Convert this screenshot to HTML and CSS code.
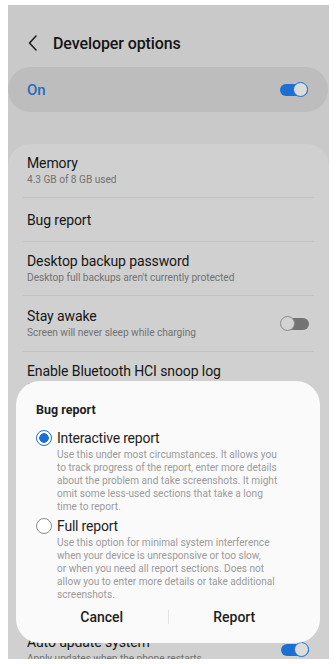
FILE: index.html
```html
<!DOCTYPE html>
<html lang="en">
<head>
    <meta charset="UTF-8">
    <meta name="viewport" content="width=device-width, initial-scale=1.0">
    <title>Developer options</title>
    <link rel="stylesheet" href="styles.css">
</head>
<body>
    <div class="screen">
        <div class="header">
            <svg class="back" width="10" height="16" viewBox="0 0 10 16">
                <polyline points="8,1 1.5,8 8,15" fill="none" stroke="#1a1a1a" stroke-width="1.5" stroke-linecap="round" stroke-linejoin="round"/>
            </svg>
            <h1>Developer options</h1>
        </div>

        <div class="master-switch">
            <span class="on-label">On</span>
            <span class="toggle on"></span>
        </div>

        <div class="settings-card">
            <div class="item">
                <div class="item-title">Memory</div>
                <div class="item-sub">4.3 GB of 8 GB used</div>
            </div>
            <div class="divider"></div>
            <div class="item single">
                <div class="item-title">Bug report</div>
            </div>
            <div class="divider"></div>
            <div class="item">
                <div class="item-title">Desktop backup password</div>
                <div class="item-sub">Desktop full backups aren't currently protected</div>
            </div>
            <div class="divider"></div>
            <div class="item with-toggle">
                <div>
                    <div class="item-title">Stay awake</div>
                    <div class="item-sub">Screen will never sleep while charging</div>
                </div>
                <span class="toggle"></span>
            </div>
            <div class="divider"></div>
            <div class="item">
                <div class="item-title">Enable Bluetooth HCI snoop log</div>
                <div class="item-sub">Capture all Bluetooth HCI packets in a file</div>
            </div>
            <div class="divider"></div>
            <div class="item">
                <div class="item-title">OEM unlocking</div>
                <div class="item-sub">Allow the bootloader to be unlocked</div>
            </div>
            <div class="divider"></div>
            <div class="item">
                <div class="item-title">Running services</div>
                <div class="item-sub">View and control currently running services</div>
            </div>
            <div class="divider"></div>
            <div class="item">
                <div class="item-title">Picture color mode</div>
                <div class="item-sub">Use sRGB</div>
            </div>
            <div class="divider"></div>
            <div class="item">
                <div class="item-title">WebView implementation</div>
                <div class="item-sub">Android System WebView</div>
            </div>
            <div class="divider"></div>
            <div class="item with-toggle">
                <div>
                    <div class="item-title">Auto update system</div>
                    <div class="item-sub">Apply updates when the phone restarts</div>
                </div>
                <span class="toggle on"></span>
            </div>
        </div>

        <div class="dialog">
            <div class="dialog-title">Bug report</div>

            <div class="option">
                <div class="option-row">
                    <span class="radio checked"></span>
                    <span class="option-label">Interactive report</span>
                </div>
                <p class="option-desc">Use this under most circumstances. It allows you<br>to track progress of the report, enter more details<br>about the problem and take screenshots. It might<br>omit some less-used sections that take a long<br>time to report.</p>
            </div>

            <div class="option second">
                <div class="option-row">
                    <span class="radio"></span>
                    <span class="option-label">Full report</span>
                </div>
                <p class="option-desc">Use this option for minimal system interference<br>when your device is unresponsive or too slow,<br>or when you need all report sections. Does not<br>allow you to enter more details or take additional<br>screenshots.</p>
            </div>

            <div class="dialog-buttons">
                <button class="dialog-btn">Cancel</button>
                <span class="btn-sep"></span>
                <button class="dialog-btn">Report</button>
            </div>
        </div>
    </div>
</body>
</html>
```

FILE: styles.css
```css
body {
    margin: 0;
    background: #ffffff;
    font-family: Roboto, "Noto Sans", sans-serif;
}
.screen {
    position: relative;
    width: 321px;
    height: 654px;
    margin: 5px 0 0 8px;
    background-color: #c9c9c9;
    overflow: hidden;
}
.header {
    display: flex;
    align-items: center;
    height: 48px;
    margin-top: 14px;
    padding-left: 20px;
}
.back {
    margin-right: 15px;
}
h1 {
    margin: 0;
    font-size: 16px;
    font-weight: 500;
    color: #141414;
    letter-spacing: -0.1px;
}
.master-switch {
    display: flex;
    align-items: center;
    justify-content: space-between;
    height: 45px;
    margin-right: 1px;
    padding: 0 20px 0 19px;
    border-radius: 23px;
    background-color: #bdbdbd;
}
.on-label {
    font-size: 15px;
    font-weight: 500;
    color: #2a6cbd;
}
.toggle {
    position: relative;
    display: inline-block;
    width: 29px;
    height: 16px;
    flex-shrink: 0;
}
.toggle::before {
    content: "";
    position: absolute;
    left: 1px;
    right: 0;
    top: 2px;
    height: 12px;
    border-radius: 6px;
    background-color: #737373;
}
.toggle::after {
    content: "";
    position: absolute;
    left: 0;
    top: 0;
    width: 13px;
    height: 13px;
    border-radius: 50%;
    border: 1.5px solid #8a8a8a;
    background-color: #d2d2d2;
}
.toggle.on::before {
    background-color: #1c6fd3;
}
.toggle.on::after {
    left: auto;
    right: 0;
    border-color: #1c6fd3;
    background-color: #dcdcdc;
}
.settings-card {
    margin-top: 32px;
    border-radius: 22px 22px 0 0;
    background-color: #d0d0d0;
}
.item {
    padding: 10px 20px 10px 19px;
}
.item.single {
    padding: 12.5px 20px 12.5px 19px;
}
.item.with-toggle {
    display: flex;
    align-items: center;
    justify-content: space-between;
    padding-top: 11px;
    padding-bottom: 11px;
}
.item-title {
    font-size: 14px;
    line-height: 18px;
    color: #161616;
    letter-spacing: -0.1px;
}
.item-sub {
    font-size: 10.2px;
    line-height: 15px;
    color: #727272;
    letter-spacing: -0.05px;
}
.divider {
    height: 1px;
    margin: 0 15px;
    background-color: #c2c2c2;
}
.dialog {
    position: absolute;
    left: 8px;
    top: 376px;
    width: 264px;
    padding: 20px 20px 16px;
    border-radius: 24px;
    background-color: #fafafa;
}
.dialog-title {
    font-size: 12.5px;
    font-weight: 700;
    line-height: 17px;
    color: #1e1e1e;
}
.option {
    margin-top: 10px;
}
.option.second {
    margin-top: 3px;
}
.option-row {
    display: flex;
    align-items: center;
    height: 20px;
}
.radio {
    box-sizing: border-box;
    width: 16px;
    height: 16px;
    margin-right: 5px;
    border-radius: 50%;
    border: 1.2px solid #8c8c8c;
    background-color: #ffffff;
}
.radio.checked {
    border: 1.5px solid #1c6fd3;
    background: radial-gradient(circle, #1c6fd3 0, #1c6fd3 4.5px, #ffffff 5px);
}
.option-label {
    font-size: 14px;
    color: #1e1e1e;
    letter-spacing: -0.2px;
}
.option-desc {
    margin: 0 0 0 21px;
    font-size: 10.1px;
    line-height: 13px;
    color: #9a9a9a;
}
.dialog-buttons {
    display: flex;
    align-items: center;
    margin-top: 6px;
    height: 20px;
}
.dialog-btn {
    flex: 1;
    padding: 0;
    border: none;
    background: none;
    font-family: inherit;
    font-size: 14px;
    font-weight: 500;
    color: #1e1e1e;
}
.btn-sep {
    width: 1px;
    height: 14px;
    background-color: #e3e3e3;
}
```
